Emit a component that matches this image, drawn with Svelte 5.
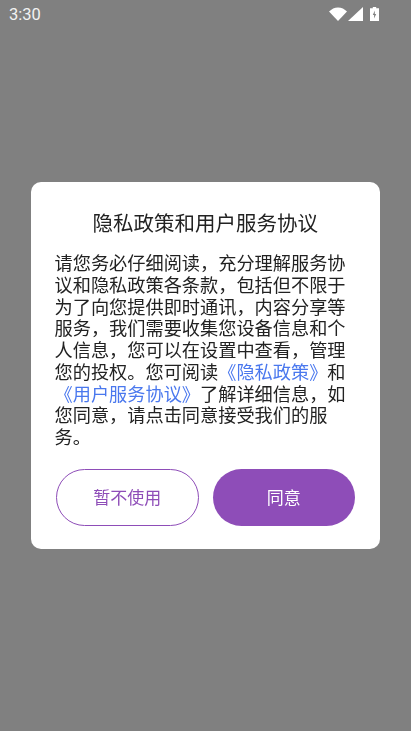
<script>
  const lines = [
    [['请您务必仔细阅读，充分理解服务协']],
    [['议和隐私政策各条款，包括但不限于']],
    [['为了向您提供即时通讯，内容分享等']],
    [['服务，我们需要收集您设备信息和个']],
    [['人信息，您可以在设置中查看，管理']],
    [['您的投权。您可阅读'], ['《隐私政策》', true], ['和']],
    [['《用户服务协议》', true], ['了解详细信息，如']],
    [['您同意，请点击同意接受我们的服']],
    [['务。']]
  ];
</script>

<div class="screen">
  <header class="status">
    <span class="time">3:30</span>
    <div class="icons">
      <svg class="wifi" width="18" height="14" viewBox="0 0 18 14" aria-hidden="true"><path d="M0 4.500C2.500 2 5.500.4 9 .4S15.500 2 18 4.500L9 14z" fill="#fff"/></svg>
      <svg class="signal" width="15" height="14" viewBox="0 0 15 14" aria-hidden="true"><path d="M15 0v14H0z" fill="#fff"/></svg>
      <svg width="9" height="14" viewBox="0 0 9 14" aria-hidden="true"><path d="M2.800 0h3.400v1.200H9V14H0V1.200h2.800z" fill="#fff"/><path d="M4.800 3.500 2.800 8h1.300v3.500L6.200 7H4.800z" fill="#808080"/></svg>
    </div>
  </header>

  <main class="center">
    <section class="card">
      <h1>隐私政策和用户服务协议</h1>
      <div class="body">
        {#each lines as line}
          <div class="line">
            {#each line as part}
              {#if part[1]}<span class="link">{part[0]}</span>{:else}{part[0]}{/if}
            {/each}
          </div>
        {/each}
      </div>
      <div class="actions">
        <button class="btn ghost">暂不使用</button>
        <button class="btn solid">同意</button>
      </div>
    </section>
  </main>
</div>

<style>
  :global(body) {
    margin: 0;
    background: #808080;
  }
  .screen {
    width: 411px;
    height: 731px;
    background: #808080;
    font-family: "Noto Sans CJK SC", "Roboto", sans-serif;
    display: flex;
    flex-direction: column;
    overflow: hidden;
  }
  .status {
    height: 28px;
    padding: 0 32px 0 9px;
    display: flex;
    justify-content: space-between;
    align-items: center;
    color: #fff;
  }
  .time {
    font-family: Roboto, sans-serif;
    font-size: 16.500px;
    color: #f2f2f2;
  }
  .icons {
    display: flex;
    align-items: center;
  }
  .wifi {
    margin-right: 1px;
  }
  .signal {
    margin-right: 7px;
  }
  .center {
    padding: 154px 31px 0;
  }
  .card {
    width: 349px;
    height: 367px;
    background: #fff;
    border-radius: 10px;
    box-sizing: border-box;
    padding: 27px 24px 0 23.500px;
    display: flex;
    flex-direction: column;
    will-change: transform;
  }
  h1 {
    margin: 0;
    font-size: 20.500px;
    font-weight: 400;
    line-height: 26px;
    text-align: center;
    color: #222;
  }
  .body {
    margin-top: 17px;
    font-size: 18.200px;
    font-weight: 400;
    line-height: 21.750px;
    color: #222;
  }
  .line {
    white-space: nowrap;
  }
  .link {
    color: #4a78ee;
  }
  .actions {
    margin-top: 21.500px;
    margin-left: 1.500px;
    display: flex;
    gap: 14px;
  }
  .btn {
    width: 142.500px;
    height: 57px;
    border-radius: 29px;
    box-sizing: border-box;
    font-family: inherit;
    font-size: 17px;
    font-weight: 400;
    padding: 0 0 2px;
  }
  .ghost {
    background: #fff;
    border: 1px solid #8e4db8;
    color: #8e4db8;
  }
  .solid {
    background: #8e4db8;
    border: 0;
    color: #fff;
  }
</style>
